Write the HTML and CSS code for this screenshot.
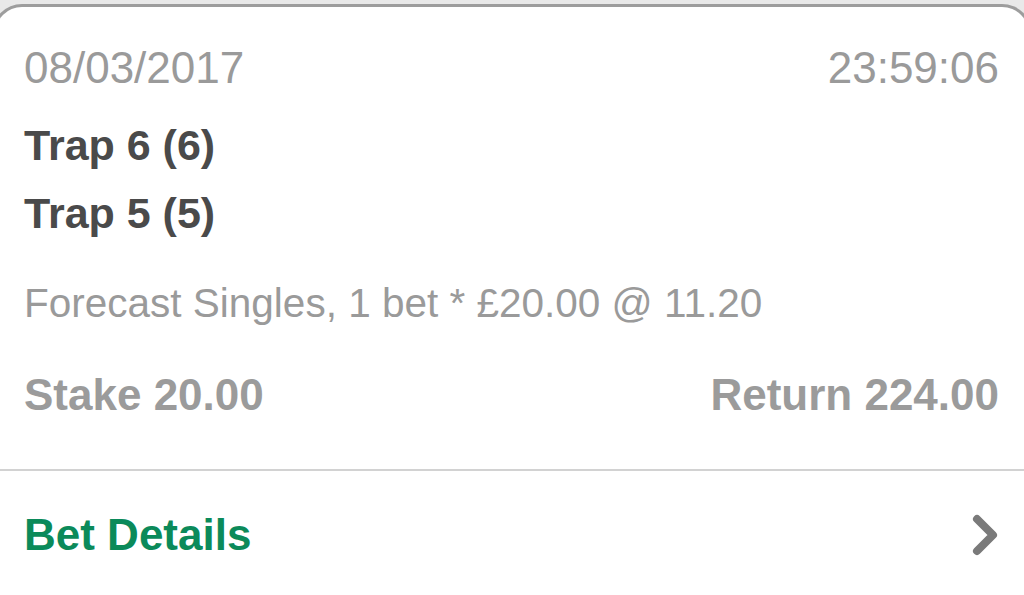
FILE: index.html
```html
<!DOCTYPE html>
<html>
  <head>
    <meta http-equiv="Content-Type" content="text/html; charset=UTF-8">
    <title>My Bets</title>
    <link rel="stylesheet" href="styles.css">
  </head>
  <body>
    <div class="card">
      <div class="card-body">
        <div class="meta">
          <span>08/03/2017</span>
          <span>23:59:06</span>
        </div>
        <div class="selection first">Trap 6 (6)</div>
        <div class="selection">Trap 5 (5)</div>
        <div class="bet-type">Forecast Singles, 1 bet * £20.00 @ 11.20</div>
        <div class="totals">
          <span>Stake 20.00</span>
          <span>Return 224.00</span>
        </div>
      </div>
      <a class="details" href="#">
        <span>Bet Details</span>
        <svg class="chevron" width="28" height="42" viewBox="0 0 28 42">
          <path d="M6 5 L22 21 L6 37" fill="none" stroke="#7a7a7a" stroke-width="8" stroke-linecap="round" stroke-linejoin="round"/>
        </svg>
      </a>
    </div>
  </body>
</html>
```

FILE: styles.css
```css
html, body {
  height: 100%;
}
body {
  font-family: "Liberation Sans", Arial, Helvetica, sans-serif;
  background-color: #e9e9e9;
  margin: 0;
  overflow: hidden;
}
.card {
  background-color: #fff;
  margin: 4px -8px 0;
  border: 3px solid #9d9d9d;
  border-bottom: 0;
  border-radius: 30px 30px 0 0;
  height: 591px;
  box-sizing: border-box;
}
.card-body {
  padding: 31px 30px 44px 29px;
  border-bottom: 2px solid #d2d2d2;
}
.meta {
  display: flex;
  justify-content: space-between;
  font-size: 44px;
  line-height: 60px;
  color: #9a9a9a;
}
.selection {
  font-size: 43px;
  font-weight: bold;
  line-height: 68px;
  color: #4a4a4a;
}
.selection.first {
  margin-top: 13px;
}
.bet-type {
  margin-top: 26px;
  font-size: 40.5px;
  line-height: 60px;
  color: #9a9a9a;
}
.totals {
  display: flex;
  justify-content: space-between;
  margin-top: 32px;
  font-size: 44px;
  font-weight: bold;
  line-height: 60px;
  color: #9b9b9b;
}
.details {
  display: flex;
  justify-content: space-between;
  align-items: center;
  padding: 34px 30px 0 29px;
  font-size: 44px;
  font-weight: bold;
  line-height: 60px;
  color: #0b8a5a;
  text-decoration: none;
}
.chevron {
  display: block;
}
```
